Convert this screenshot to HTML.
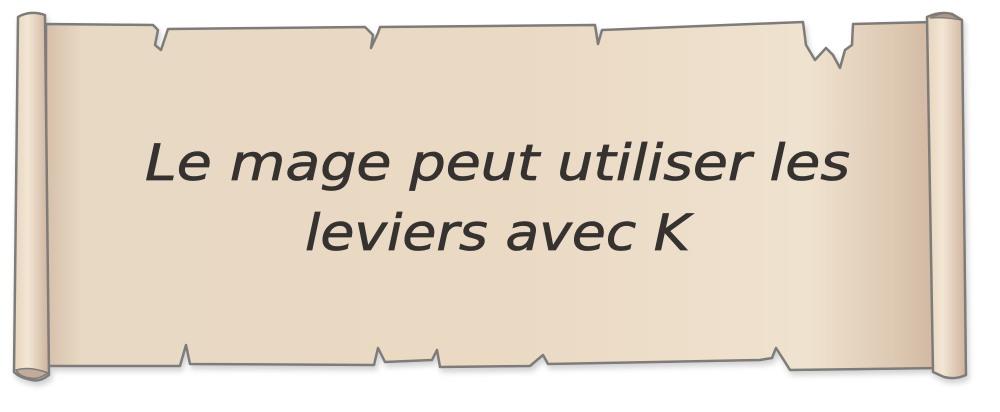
<!DOCTYPE html>
<html><head><meta charset="utf-8"><style>
html,body{margin:0;padding:0;background:#fff;width:1000px;height:412px;overflow:hidden}
</style></head><body>
<svg width="1000" height="412" viewBox="0 0 1000 412" xmlns="http://www.w3.org/2000/svg">
<defs>
<linearGradient id="pg" x1="0" x2="1" y1="0" y2="0">
<stop offset="0" stop-color="#d6bfaa"/>
<stop offset="0.04" stop-color="#e8d9c4"/>
<stop offset="0.5" stop-color="#ead9c3"/>
<stop offset="0.85" stop-color="#efe2cf"/>
<stop offset="0.95" stop-color="#dcc7b1"/>
<stop offset="1" stop-color="#cdb39e"/>
</linearGradient>
<linearGradient id="rl" x1="0" x2="1">
<stop offset="0" stop-color="#e6d4bd"/>
<stop offset="0.4" stop-color="#f3e6d4"/>
<stop offset="1" stop-color="#cdb29c"/>
</linearGradient>
<filter id="sh" x="-5%" y="-5%" width="110%" height="115%"><feDropShadow dx="2" dy="4" stdDeviation="3" flood-color="#000" flood-opacity="0.18"/></filter>
</defs>
<g filter="url(#sh)">
<path d="M46 24 L153 25 L158 30 L155 45 L161 50 L168 29 L365 27 L373 35 L371 48 L378 33 L380 27 L595 25 L598 44 L602 30 L803 22 L806 45 L815 60 L826 48 L833 55 L840 68 L845 50 L852 45 L853 24 L933 22 L944 368 L790 370 L785 362 L776 348 L772 358 L760 360 L548 364 L543 355 L530 366 L440 367 L437 350 L432 360 L385 362 L378 348 L374 365 L190 364 L186 345 L180 366 L46 366 Z" fill="url(#pg)" stroke="#7d7b79" stroke-width="2.5" stroke-linejoin="round"/>
<path d="M18 17 Q30 10 45 15 L49 375 Q40 382 32 380 Q20 378 14 372 Z" fill="url(#rl)" stroke="#7d7b79" stroke-width="2.5" stroke-linejoin="round"/>
<path d="M16 370 Q30 366 48 373 Q38 380 30 378 Q20 377 16 370Z" fill="#c3ab99" stroke="#7d7b79" stroke-width="1.5"/>
<path d="M927 17 Q940 11 952 14 L962 20 L966 375 Q955 380 944 377 L933 372 Z" fill="url(#rl)" stroke="#7d7b79" stroke-width="2.5" stroke-linejoin="round"/>
<path d="M930 18 Q942 12 950 14 L961 20 Q945 17 930 18Z" fill="#b09888" stroke="#7d7b79" stroke-width="1.2"/>
</g>
<g font-family="DejaVu Sans, sans-serif" font-style="oblique" font-size="50" fill="#353230" stroke="#353230" stroke-width="0.8">
<text x="145" y="180" textLength="705" lengthAdjust="spacingAndGlyphs">Le mage peut utiliser les</text>
<text x="305" y="250" textLength="385" lengthAdjust="spacingAndGlyphs">leviers avec K</text>
</g>
</svg>
</body></html>
